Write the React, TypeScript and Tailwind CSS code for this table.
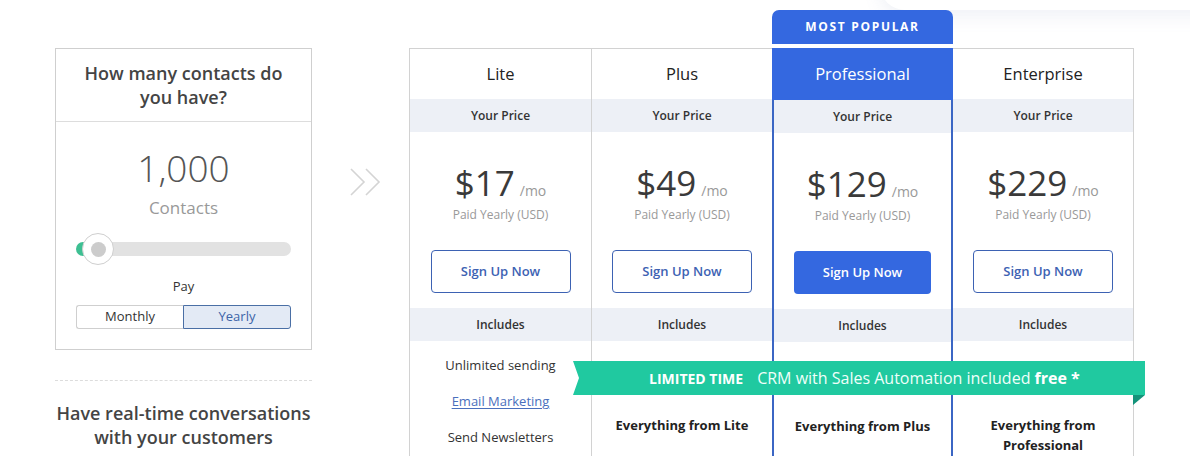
import React from "react";

const font = { fontFamily: '"Open Sans", "Noto Sans", Arial, sans-serif' };

type Plan = {
  name: string;
  price: string;
  popular?: boolean;
  feature?: React.ReactNode;
  lite?: boolean;
};

const plans: Plan[] = [
  { name: "Lite", price: "$17", lite: true },
  { name: "Plus", price: "$49", feature: "Everything from Lite" },
  { name: "Professional", price: "$129", popular: true, feature: "Everything from Plus" },
  {
    name: "Enterprise",
    price: "$229",
    feature: (
      <>
        Everything from
        <br />
        Professional
      </>
    ),
  },
];

function Column({ p, idx }: { p: Plan; idx: number }) {
  const pro = !!p.popular;
  const borderCls = pro
    ? "border-x-2 border-[#3b66c4]"
    : idx === 3
    ? "border-t border-r border-[#d2d2d2]"
    : "border-t border-l border-[#d2d2d2]";
  return (
    <div className="flex flex-col">
      {pro ? (
        <div className="h-[34px] rounded-t-[7px] bg-[#3468e0] flex items-center justify-center text-white text-[12px] font-bold tracking-[0.14em]">
          MOST POPULAR
        </div>
      ) : (
        <div className="h-[38px]" />
      )}
      {pro && <div className="h-[4px]" />}
      <div className={`flex-1 flex flex-col ${borderCls}`}>
        <div
          className={
            pro
              ? "h-[52px] bg-[#3468e0] text-white flex items-center justify-center text-[16.5px] font-medium -mx-[2px] pt-[1px]"
              : "h-[50px] flex items-center justify-center text-[16.5px] text-[#222] font-medium"
          }
        >
          {p.name}
        </div>
        <div className="h-[33px] bg-[#edf0f6] flex items-center justify-center text-[12px] font-semibold text-[#333]">
          Your Price
        </div>
        <div className="h-[176px] flex flex-col items-center pt-[33px]">
          <div className="flex items-baseline leading-[36px]">
            <span className="text-[35px] text-[#3a3a3a]">{p.price}</span>
            <span className="text-[14px] text-[#999] ml-[5px]">/mo</span>
          </div>
          <div className="-mt-[2px] text-[12px] leading-[16px] text-[#999]">Paid Yearly (USD)</div>
          <div
            className={
              pro
                ? "mt-[27px] w-[137px] h-[43px] rounded-[4px] bg-[#3468e0] text-white flex items-center justify-center text-[13px] font-semibold"
                : "mt-[27px] w-[140px] h-[43px] rounded-[4px] border border-[#3d62b3] text-[#3d62b3] flex items-center justify-center text-[13px] font-semibold"
            }
          >
            Sign Up Now
          </div>
        </div>
        <div className="h-[33px] bg-[#edf0f6] flex items-center justify-center text-[12px] font-semibold text-[#333]">
          Includes
        </div>
        {p.lite ? (
          <div className="flex flex-col items-center pt-[7px] text-[13px] text-[#333]">
            <div className="h-[36px] flex items-center">Unlimited sending</div>
            <div className="h-[36px] flex items-center text-[#4a6fbd] underline underline-offset-2">
              Email Marketing
            </div>
            <div className="h-[36px] flex items-center">Send Newsletters</div>
          </div>
        ) : (
          <div className="pt-[74px] text-center text-[13px] leading-[20px] font-bold text-[#222]">
            {p.feature}
          </div>
        )}
      </div>
    </div>
  );
}

export default function App() {
  return (
    <div
      className="relative w-[1190px] h-[456px] overflow-hidden bg-white text-[#333]"
      style={font}
    >
      {/* faint top-right shadow */}
      <div className="absolute -top-[40px] left-[880px] w-[360px] h-[50px] rounded-full shadow-[0_6px_18px_rgba(120,140,180,0.12)] bg-white" />

      <div className="relative flex pt-[10px]">
        {/* left panel */}
        <div className="ml-[55px] w-[257px] pt-[38px] flex flex-col">
          <div className="border border-[#cfcfcf] flex flex-col">
            <div className="pt-[12px] pb-[12px] px-4 text-center text-[18px] leading-[24px] font-semibold text-[#444] border-b border-[#ddd]">
              How many contacts do
              <br />
              you have?
            </div>
            <div className="flex flex-col items-center pt-[24px] pb-[20px]">
              <div className="text-[37px] leading-[44px] font-light text-[#555]">1,000</div>
              <div className="mt-[6px] text-[17px] leading-[24px] text-[#999]">Contacts</div>
              <div className="relative mt-[22px] w-[215px] h-[14px]">
                <div className="absolute left-0 top-0 w-[30px] h-[14px] rounded-full bg-[#3dbf92]" />
                <div className="absolute left-[10px] right-0 top-0 h-[14px] rounded-full bg-[#e2e2e2]" />
                <div className="absolute left-[6px] -top-[9px] w-[32px] h-[32px] rounded-full bg-white border border-[#cfcfcf] flex items-center justify-center">
                  <div className="w-[15px] h-[15px] rounded-full bg-[#cccccc]" />
                </div>
              </div>
              <div className="mt-[21px] text-[13px] leading-[18px] text-[#333]">Pay</div>
              <div className="mt-[10px] w-[215px] h-[24px] flex text-[13px]">
                <div className="flex-1 border border-[#cfcfcf] border-r-0 rounded-l-[3px] flex items-center justify-center text-[#333]">
                  Monthly
                </div>
                <div className="flex-1 border border-[#4a6fa5] bg-[#e3eaf5] rounded-r-[3px] flex items-center justify-center text-[#3c64a8]">
                  Yearly
                </div>
              </div>
            </div>
          </div>
          <div className="mt-[30px] border-t border-dashed border-[#dcdcdc]" />
          <div className="mt-[20px] text-center text-[18px] leading-[24px] font-semibold text-[#444]">
            Have real-time conversations
            <br />
            with your customers
          </div>
        </div>

        {/* arrows */}
        <div className="w-[97px] pt-[157px] pl-[38px]">
          <svg width="32" height="30" viewBox="0 0 32 30" fill="none" stroke="#d4d4d4" strokeWidth="1.6">
            <polyline points="1,2 14,15 1,28" />
            <polyline points="16,2 29,15 16,28" />
          </svg>
        </div>

        {/* pricing table */}
        <div className="grid grid-cols-[182px_181px_181px_181px] h-[460px]">
          {plans.map((p, i) => (
            <Column key={p.name} p={p} idx={i} />
          ))}
        </div>
      </div>

      {/* limited time banner */}
      <div
        className="absolute left-[573px] top-[361px] w-[572px] h-[34px] bg-[#20c9a0] flex items-center pl-[76px] text-white whitespace-nowrap"
        style={{ clipPath: "polygon(0 0, 100% 0, 100% 100%, 0 100%, 6px 50%)" }}
      >
        <span className="text-[14px] font-bold">LIMITED TIME</span>
        <span className="ml-[14px] text-[16px] font-normal text-[#effffa]">
          CRM with Sales Automation included <span className="font-bold text-white">free *</span>
        </span>
      </div>
      <svg className="absolute left-[1133px] top-[395px]" width="12" height="10" viewBox="0 0 12 10">
        <polygon points="0,0 12,0 0,10" fill="#14937a" />
      </svg>
    </div>
  );
}
